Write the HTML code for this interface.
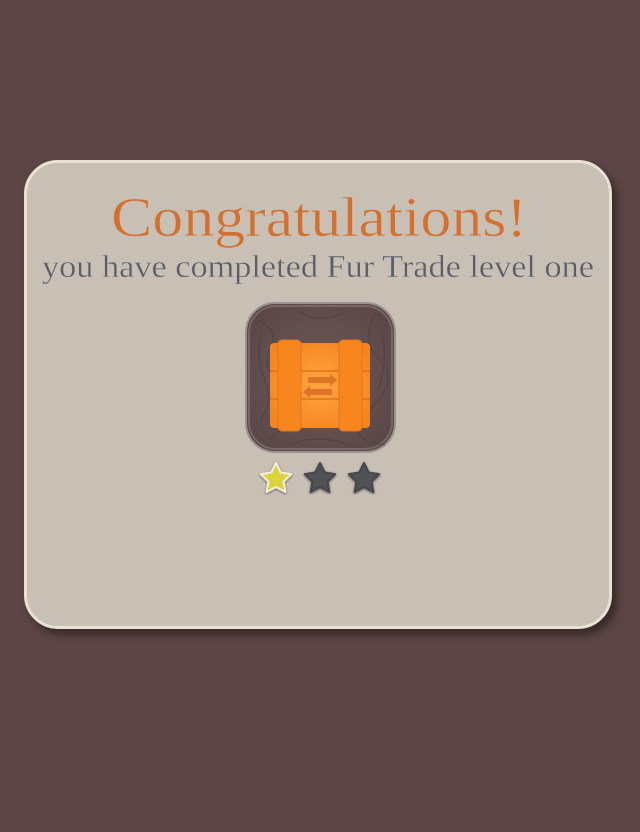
<!DOCTYPE html>
<html><head><meta charset="utf-8"><style>
html,body{margin:0;padding:0;}
body{width:640px;height:832px;background:#5b4645;position:relative;overflow:hidden;font-family:"Liberation Serif",serif;}
.card{position:absolute;left:24px;top:160px;width:582px;height:463px;background:#c8bfb5;border:3px solid #ebe1d3;border-radius:34px;box-shadow:5px 6px 8px rgba(30,18,18,0.55);}
svg{position:absolute;left:0;top:0;}
</style></head><body>
<div class="card"></div>
<svg width="640" height="832" viewBox="0 0 640 832">
<defs>
<radialGradient id="wood" cx="50%" cy="50%" r="60%">
<stop offset="0" stop-color="#6e5a5a"/><stop offset="1" stop-color="#5a4848"/>
</radialGradient>
<radialGradient id="or" cx="50%" cy="50%" r="60%">
<stop offset="0" stop-color="#ffa640"/><stop offset="1" stop-color="#f5841f"/>
</radialGradient>
<filter id="sh"><feDropShadow dx="0" dy="1" stdDeviation="1.2" flood-color="#000" flood-opacity="0.5"/></filter>
</defs>
<text x="111" y="236" textLength="416" lengthAdjust="spacingAndGlyphs" font-family="Liberation Serif, serif" font-size="56" fill="#d4702b" stroke="#c8bfb5" stroke-width="0.6">Congratulations!</text>
<text x="42" y="277" textLength="552" lengthAdjust="spacingAndGlyphs" font-family="Liberation Serif, serif" font-size="32" fill="#5a5f67" stroke="#c8bfb5" stroke-width="0.4">you have completed Fur Trade level one</text>
<!-- icon -->
<rect x="245" y="302" width="151" height="151" rx="30" fill="#9d918d"/>
<rect x="247" y="304" width="147" height="147" rx="28" fill="url(#wood)"/>
<rect x="249" y="306" width="143" height="143" rx="27" fill="none" stroke="#8a7a78" stroke-width="2" opacity="0.6"/>
<g stroke="#4e3e3e" stroke-width="1.5" fill="none" opacity="0.5">
<path d="M258 320 Q280 330 270 350 T285 390 T268 440"/>
<path d="M375 315 Q360 340 380 360 T370 410 T385 445"/>
<path d="M300 312 Q320 325 345 312"/>
<path d="M290 445 Q320 432 350 446"/>
<path d="M262 330 Q255 360 265 380 T260 420"/>
<path d="M382 330 Q388 360 378 390"/>
</g>
<rect x="270" y="343" width="100" height="85" rx="4" fill="url(#or)"/>
<g stroke="#e07518" stroke-width="1.5">
<line x1="270" y1="371" x2="370" y2="371"/><line x1="270" y1="399" x2="370" y2="399"/>
</g>
<rect x="278" y="340" width="23" height="91" rx="4" fill="#f7861f" stroke="#e07518"/>
<rect x="339" y="340" width="23" height="91" rx="4" fill="#f7861f" stroke="#e07518"/>
<path d="M308 377 h22 v-3 l7 6 l-7 6 v-3 h-22 z" fill="#de7426"/>
<path d="M332 389 h-22 v-3 l-7 6 l7 6 v-3 h22 z" fill="#de7426"/>
<!-- stars -->
<g filter="url(#sh)" stroke-linejoin="round">
<path transform="translate(276,479)" d="M0,-16 L4.7,-6.5 L15.2,-4.9 L7.6,2.5 L9.4,13 L0,8 L-9.4,13 L-7.6,2.5 L-15.2,-4.9 L-4.7,-6.5Z" fill="#dcd33a" stroke="#f2eedc" stroke-width="2"/>
<path transform="translate(320,479)" d="M0,-16 L4.7,-6.5 L15.2,-4.9 L7.6,2.5 L9.4,13 L0,8 L-9.4,13 L-7.6,2.5 L-15.2,-4.9 L-4.7,-6.5Z" fill="#4f5257" stroke="#45474b" stroke-width="2"/>
<path transform="translate(364,479)" d="M0,-16 L4.7,-6.5 L15.2,-4.9 L7.6,2.5 L9.4,13 L0,8 L-9.4,13 L-7.6,2.5 L-15.2,-4.9 L-4.7,-6.5Z" fill="#4f5257" stroke="#45474b" stroke-width="2"/>
</g>
</svg>
</body></html>
